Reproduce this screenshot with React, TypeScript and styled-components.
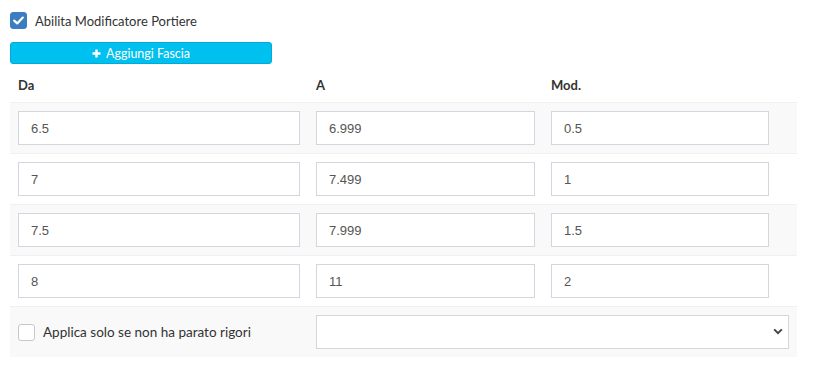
import React, { useState } from 'react';
import styled, { createGlobalStyle } from 'styled-components';

const GlobalStyle = createGlobalStyle`
  body {
    margin: 0;
    background: #fff;
    font-family: 'Lato', 'Open Sans', sans-serif;
    color: #333;
  }
  * {
    box-sizing: border-box;
  }
`;

type Fascia = { da: string; a: string; mod: string };

const initialFasce: Fascia[] = [
  { da: '6.5', a: '6.999', mod: '0.5' },
  { da: '7', a: '7.499', mod: '1' },
  { da: '7.5', a: '7.999', mod: '1.5' },
  { da: '8', a: '11', mod: '2' },
];

function CheckIcon() {
  return (
    <svg width='11' height='9' viewBox='0 0 11 9'>
      <path d='M1.2 4.6 L4.2 7.4 L9.8 1.6' fill='none' stroke='#fff' strokeWidth='2.2' strokeLinecap='round' strokeLinejoin='round' />
    </svg>
  );
}

function ChevronDown() {
  return (
    <svg width='10' height='7' viewBox='0 0 10 7'>
      <path d='M1.2 1.4 L5 5.2 L8.8 1.4' fill='none' stroke='#444' strokeWidth='2' />
    </svg>
  );
}

function App() {
  const [enabled, setEnabled] = useState(true);
  const [soloRigori, setSoloRigori] = useState(false);
  const [fasce] = useState(initialFasce);

  return (
    <>
      <GlobalStyle />
      <Wrapper>
        <CheckRow onClick={() => setEnabled(!enabled)}>
          <CheckBox $checked={enabled}>{enabled && <CheckIcon />}</CheckBox>
          <CheckLabel>Abilita Modificatore Portiere</CheckLabel>
        </CheckRow>
        <AddButton type='button'>
          <svg width='9' height='9' viewBox='0 0 9 9'>
            <path d='M4.5 0.5 V8.5 M0.5 4.5 H8.5' stroke='#fff' strokeWidth='2.4' />
          </svg>
          Aggiungi Fascia
        </AddButton>
        <Table>
          <colgroup>
            <col style={{ width: 298 }} />
            <col style={{ width: 235 }} />
            <col style={{ width: 234 }} />
            <col style={{ width: 20 }} />
          </colgroup>
          <thead>
            <tr>
              <HeadCell>Da</HeadCell>
              <HeadCell>A</HeadCell>
              <HeadCell>Mod.</HeadCell>
              <HeadCell />
            </tr>
          </thead>
          <tbody>
            {fasce.map((f, i) => (
              <Row key={i} $striped={i % 2 === 0}>
                <Cell>
                  <TextInput defaultValue={f.da} />
                </Cell>
                <Cell>
                  <TextInput defaultValue={f.a} />
                </Cell>
                <Cell>
                  <TextInput defaultValue={f.mod} />
                </Cell>
                <Cell />
              </Row>
            ))}
            <Row $striped>
              <Cell>
                <CheckRow onClick={() => setSoloRigori(!soloRigori)}>
                  <CheckBox $checked={soloRigori}>{soloRigori && <CheckIcon />}</CheckBox>
                  <OptionLabel>Applica solo se non ha parato rigori</OptionLabel>
                </CheckRow>
              </Cell>
              <Cell colSpan={3}>
                <SelectBox>
                  <Select defaultValue=''>
                    <option value='' />
                  </Select>
                  <SelectArrow>
                    <ChevronDown />
                  </SelectArrow>
                </SelectBox>
              </Cell>
            </Row>
          </tbody>
        </Table>
      </Wrapper>
    </>
  );
}

export default App;

const Wrapper = styled.div`
  width: 807px;
  padding: 12px 10px 10px 10px;
`;

const CheckRow = styled.div`
  display: flex;
  flex-direction: row;
  align-items: center;
  cursor: pointer;
`;

const CheckBox = styled.span<{ $checked?: boolean }>`
  width: 17px;
  height: 17px;
  border-radius: 3px;
  display: flex;
  align-items: center;
  justify-content: center;
  background-color: ${props => (props.$checked ? '#3b7dbf' : '#fff')};
  border: 1px solid ${props => (props.$checked ? '#3b7dbf' : '#c8c8c8')};
  flex-shrink: 0;
`;

const CheckLabel = styled.span`
  margin-left: 8px;
  font-size: 13px;
  color: #333;
`;

const OptionLabel = styled.span`
  margin-left: 8px;
  font-size: 13.5px;
  color: #333;
  white-space: nowrap;
`;

const AddButton = styled.button`
  margin-top: 13px;
  width: 262px;
  height: 22px;
  display: flex;
  align-items: center;
  justify-content: center;
  gap: 5px;
  background-color: #00c0ef;
  border: 1px solid #00acd6;
  border-radius: 3px;
  color: #fff;
  font-family: 'Lato', sans-serif;
  font-size: 12.5px;
  padding: 0;
`;

const Table = styled.table`
  width: 787px;
  margin-top: 5px;
  border-collapse: collapse;
  table-layout: fixed;
`;

const HeadCell = styled.th`
  text-align: left;
  font-size: 13px;
  font-weight: bold;
  color: #333;
  padding: 8px 8px;
  line-height: 17px;
`;

const Row = styled.tr<{ $striped?: boolean }>`
  background-color: ${props => (props.$striped ? '#f9f9f9' : '#fff')};
  border-top: 1px solid #f0f0f0;
`;

const Cell = styled.td`
  padding: 8px;
  vertical-align: middle;
`;

const TextInput = styled.input`
  width: 100%;
  height: 34px;
  border: 1px solid #d2d6de;
  border-radius: 0;
  padding: 6px 12px;
  font-family: 'Liberation Sans', Arial, sans-serif;
  font-size: 13px;
  color: #555;
  background: #fff;
  outline: none;
`;

const SelectBox = styled.div`
  position: relative;
`;

const Select = styled.select`
  width: 100%;
  height: 34px;
  border: 1px solid #d2d6de;
  border-radius: 0;
  background: #fff;
  appearance: none;
  padding: 6px 12px;
  font-family: 'Liberation Sans', Arial, sans-serif;
  font-size: 13px;
  outline: none;
`;

const SelectArrow = styled.span`
  position: absolute;
  right: 6px;
  top: 13px;
  display: flex;
  pointer-events: none;
`;
